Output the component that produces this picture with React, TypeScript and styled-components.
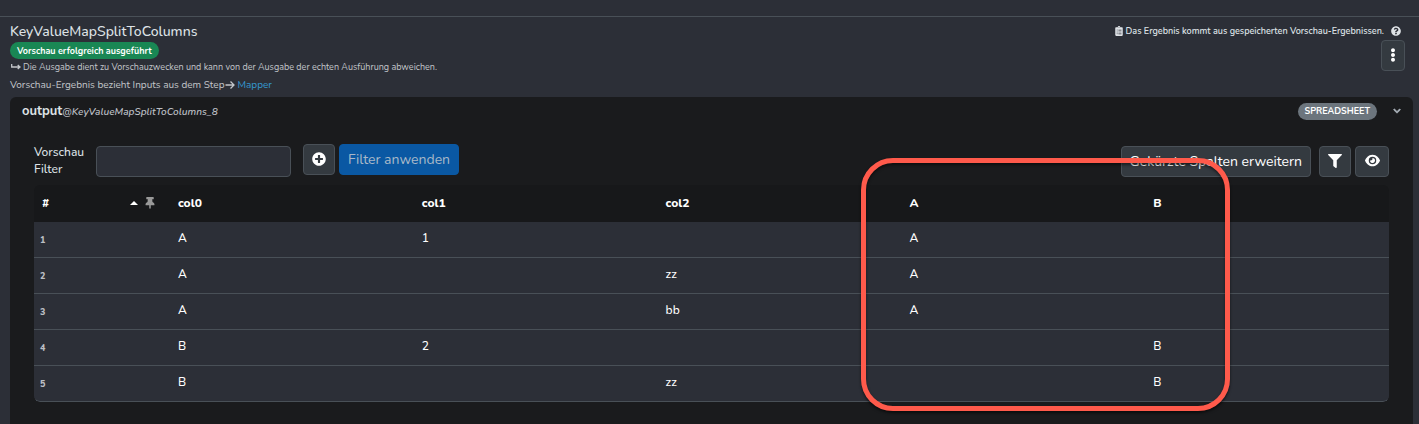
import React from "react";
import styled, { createGlobalStyle } from "styled-components";
import {
  FaChevronDown,
  FaClipboardList,
  FaEllipsisV,
  FaFilter,
  FaPlusCircle,
  FaQuestionCircle,
  FaThumbtack,
} from "react-icons/fa";
import { FaEye } from "react-icons/fa6";

const GlobalStyle = createGlobalStyle`
  * { box-sizing: border-box; }
  body {
    margin: 0;
    background: #2c2f37;
    color: #dee2e6;
    font-family: Nunito, "Open Sans", "Noto Sans", sans-serif;
    font-size: 12px;
  }
  button, input { font: inherit; }
`;

const Page = styled.div`
  position: relative;
  overflow: hidden;
  min-height: 100vh;
  display: flex;
  flex-direction: column;
`;

const TopBar = styled.div`
  height: 17px;
  border-bottom: 1px solid #495057;
`;

const Header = styled.header`
  display: flex;
  justify-content: space-between;
  padding: 5px 14px 2px 10px;
`;

const HeaderInfo = styled.div`
  display: flex;
  flex-direction: column;
  align-items: flex-start;
`;

const HeaderSide = styled.div`
  display: flex;
  flex-direction: column;
  align-items: flex-end;
`;

const Title = styled.h1`
  margin: 0;
  font-size: 14px;
  line-height: 20px;
  font-weight: 500;
`;

const Badge = styled.span<{ $color: string }>`
  display: inline-flex;
  align-items: center;
  height: 17px;
  padding: 0 7px;
  border-radius: 9px;
  background: ${(p) => p.$color};
  color: #fff;
  font-size: 9px;
  font-weight: 700;
  line-height: 16px;
`;

const Note = styled.p<{ $size: number }>`
  margin: 0 0 1px;
  color: #c3c6ca;
  font-size: ${(p) => p.$size}px;
  line-height: 17px;
`;

const Arrow = styled.svg`
  display: inline-block;
  width: 10px;
  height: 10px;
  margin: 0 2px 0 1px;
  vertical-align: -2px;
  fill: none;
  stroke: currentColor;
  stroke-width: 1.3;
`;

const StepLink = styled.a`
  color: #3498cf;
  text-decoration: none;
`;

const Saved = styled.div`
  display: flex;
  align-items: center;
  gap: 2px;
  padding-right: 4px;
  height: 18px;
  font-size: 9px;
  font-weight: 600;
  svg:last-child { margin-left: 5px; }
`;

const Button = styled.button<{ $primary?: boolean; $width?: number }>`
  display: inline-flex;
  align-items: center;
  justify-content: center;
  height: 31px;
  flex: none;
  width: ${(p) => (p.$width ? `${p.$width}px` : "auto")};
  padding: ${(p) => (p.$width ? "0 0 2px" : "0 8px")};
  border: 1px solid ${(p) => (p.$primary ? "#0a58a3" : "#495057")};
  border-radius: 4px;
  background: ${(p) => (p.$primary ? "#0a58a3" : "#343a40")};
  color: ${(p) => (p.$primary ? "#a9b8c8" : "#fff")};
  font-size: 14px;
  white-space: nowrap;
`;

const Panel = styled.section`
  flex: 1;
  margin: 0 6px 0 10px;
  border-radius: 6px 6px 0 0;
  background: #1a1b1d;
`;

const PanelHeader = styled.div`
  display: flex;
  align-items: center;
  justify-content: space-between;
  height: 28px;
  padding: 0 12px;
`;

const PanelTitle = styled.h2`
  margin: 0;
  font-size: 13px;
  line-height: 20px;
  font-weight: 700;
`;

const PanelSource = styled.em`
  color: #bcbfc4;
  font-size: 10px;
  font-weight: 600;
`;

const PanelMeta = styled.div`
  display: flex;
  align-items: center;
  gap: 16px;
  color: #adb5bd;
`;

const Chevron = styled(FaChevronDown)`
  stroke: currentColor;
  stroke-width: 40;
`;

const PanelBody = styled.div`
  padding: 18px 24px 20px;
`;

const Toolbar = styled.form`
  display: flex;
  align-items: flex-start;
  height: 42px;
`;

const FilterLabel = styled.label`
  width: 62px;
  padding-top: 1px;
  line-height: 17px;
  font-weight: 500;
`;

const FilterInput = styled.input`
  width: 195px;
  height: 31px;
  margin: 3px 12px 0 0;
  padding: 0 8px;
  border: 1px solid #495057;
  border-radius: 4px;
  background: #2c2f37;
  color: #fff;
`;

const ButtonGroup = styled.div<{ $end?: boolean }>`
  display: flex;
  gap: 4px;
  margin-left: ${(p) => (p.$end ? "auto" : "0")};
  padding-top: ${(p) => (p.$end ? 3 : 1)}px;
`;

const ExpandButton = styled(Button)`
  margin-right: 4px;
`;

const Table = styled.table`
  width: 100%;
  table-layout: fixed;
  border-collapse: separate;
  border-spacing: 0;
  border-radius: 6px;
  overflow: hidden;
  color: #fff;
  font-weight: 500;
`;

const HeadCell = styled.th<{ $width?: number }>`
  width: ${(p) => (p.$width ? `${p.$width}px` : "auto")};
  height: 37px;
  padding: 0 8px 1px;
  background: #17181a;
  text-align: left;
  font-weight: 800;
`;

const IndexHead = styled.div`
  display: flex;
  align-items: center;
  justify-content: space-between;
  padding-right: 6px;
`;

const SortIcons = styled.span`
  display: flex;
  align-items: center;
  gap: 6px;
  color: #999;
`;

const Caret = styled.span`
  border: 4px solid transparent;
  border-top: 0;
  border-bottom-color: #fff;
`;

const IndexCell = styled.th`
  height: 36px;
  padding: 0 6px;
  background: #2c2f37;
  border-bottom: 1px solid #495057;
  color: #bcbfc4;
  text-align: left;
  font-size: 9px;
  font-weight: 800;
`;

const Cell = styled.td`
  height: 36px;
  padding: 0 8px 3px;
  background: #2c2f37;
  border-bottom: 1px solid #495057;
`;

const TableRow = styled.tr`
  &:last-child > :first-child { border-bottom-left-radius: 6px; }
  &:last-child > :last-child { border-bottom-right-radius: 6px; }
`;

const Highlight = styled.div`
  position: absolute;
  top: 158px;
  left: 861px;
  width: 369px;
  height: 253px;
  border: 5px solid #ff5a4b;
  border-radius: 32px;
  box-shadow: 0 2px 3px rgba(0, 0, 0, 0.6), inset 0 2px 3px rgba(0, 0, 0, 0.5);
  pointer-events: none;
`;

const columns = ["col0", "col1", "col2", "A", "B"];
const rows = [
  ["A", "1", "", "A", ""],
  ["A", "", "zz", "A", ""],
  ["A", "", "bb", "A", ""],
  ["B", "2", "", "", "B"],
  ["B", "", "zz", "", "B"],
];

export default function App() {
  return (
    <Page>
      <GlobalStyle />
      <TopBar />
      <Header>
        <HeaderInfo>
          <Title>KeyValueMapSplitToColumns</Title>
          <Badge $color="#198754">Vorschau erfolgreich ausgeführt</Badge>
          <Note $size={9}>
            <Arrow viewBox="0 0 10 10"><path d="M0.7 2V5H9M6.7 3L9 5L6.7 7" /></Arrow>
            Die Ausgabe dient zu Vorschauzwecken und kann von der Ausgabe der echten Ausführung abweichen.
          </Note>
          <Note $size={10}>
            Vorschau-Ergebnis bezieht Inputs aus dem Step
            <Arrow viewBox="0 0 10 10"><path d="M0.5 5H9M5.5 1.5L9 5L5.5 8.5" /></Arrow>
            <StepLink href="#mapper">Mapper</StepLink>
          </Note>
        </HeaderInfo>
        <HeaderSide>
          <Saved>
            <FaClipboardList size={10} />
            <span>Das Ergebnis kommt aus gespeicherten Vorschau-Ergebnissen.</span>
            <FaQuestionCircle size={10} />
          </Saved>
          <Button type="button" $width={24} aria-label="Mehr"><FaEllipsisV size={14} /></Button>
        </HeaderSide>
      </Header>
      <Panel>
        <PanelHeader>
          <PanelTitle>output<PanelSource>@KeyValueMapSplitToColumns_8</PanelSource></PanelTitle>
          <PanelMeta>
            <Badge $color="#6c757d">SPREADSHEET</Badge>
            <Chevron size={8} />
          </PanelMeta>
        </PanelHeader>
        <PanelBody>
          <Toolbar>
            <FilterLabel htmlFor="filter">Vorschau<br />Filter</FilterLabel>
            <FilterInput id="filter" type="text" />
            <ButtonGroup>
              <Button type="button" $width={32} aria-label="Filter hinzufügen"><FaPlusCircle size={14} /></Button>
              <Button type="button" $primary>Filter anwenden</Button>
            </ButtonGroup>
            <ButtonGroup $end>
              <ExpandButton type="button">Gekürzte Spalten erweitern</ExpandButton>
              <Button type="button" $width={32} aria-label="Filtern"><FaFilter size={14} /></Button>
              <Button type="button" $width={34} aria-label="Anzeigen"><FaEye size={15} /></Button>
            </ButtonGroup>
          </Toolbar>
          <Table>
            <thead>
              <tr>
                <HeadCell $width={136}>
                  <IndexHead>
                    #
                    <SortIcons><Caret /><FaThumbtack size={12} /></SortIcons>
                  </IndexHead>
                </HeadCell>
                {columns.map((c) => <HeadCell key={c}>{c}</HeadCell>)}
              </tr>
            </thead>
            <tbody>
              {rows.map((row, i) => (
                <TableRow key={i}>
                  <IndexCell scope="row">{i + 1}</IndexCell>
                  {row.map((value, j) => <Cell key={j}>{value}</Cell>)}
                </TableRow>
              ))}
            </tbody>
          </Table>
        </PanelBody>
      </Panel>
      <Highlight />
    </Page>
  );
}
